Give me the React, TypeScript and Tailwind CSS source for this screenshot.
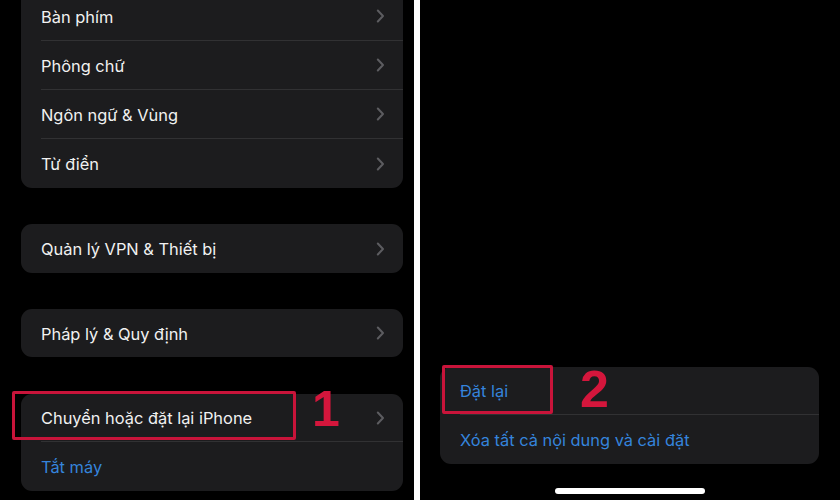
import React from "react";

const Chevron = () => (
  <svg width="9" height="14" viewBox="0 0 9 14" fill="none" className="shrink-0">
    <path d="M1.8 1.5L7 7L1.8 12.5" stroke="#5c5c60" strokeWidth="2" strokeLinecap="round" strokeLinejoin="round" />
  </svg>
);

type RowProps = { label: string; chevron?: boolean; blue?: boolean; last?: boolean; h?: string };

const Row = ({ label, chevron = true, blue = false, last = false, h = "h-[49px]" }: RowProps) => (
  <div className={`flex items-center pl-[20px] ${h}`}>
    <div className={`flex flex-1 h-full items-center pr-[18px] ${last ? "" : "border-b border-[#313133]"}`}>
      <span className={`flex-1 pt-[2px] text-[16.4px] ${blue ? "text-[#3584dc]" : "text-[#f1f1f1]"}`}>{label}</span>
      {chevron && <Chevron />}
    </div>
  </div>
);

const Card = ({ children, className = "" }: { children: React.ReactNode; className?: string }) => (
  <div className={`bg-[#1c1c1e] rounded-[11px] overflow-hidden ${className}`}>{children}</div>
);

export default function App() {
  return (
    <div
      className="relative flex w-[840px] h-[500px] bg-black overflow-hidden"
      style={{ fontFamily: "Inter, 'Noto Sans', 'Liberation Sans', sans-serif" }}
    >
      {/* left screen */}
      <div className="w-[414px] h-full bg-black pl-[21px] pr-[11px]">
        <Card className="-mt-[8px] rounded-t-none">
          <Row label="Bàn phím" />
          <Row label="Phông chữ" />
          <Row label="Ngôn ngữ & Vùng" />
          <Row label="Từ điển" last />
        </Card>
        <Card className="mt-[36px]">
          <Row label="Quản lý VPN & Thiết bị" last />
        </Card>
        <Card className="mt-[36px]">
          <Row label="Pháp lý & Quy định" last h="h-[48px]" />
        </Card>
        <Card className="mt-[37px]">
          <Row label="Chuyển hoặc đặt lại iPhone" h="h-[48px]" />
          <Row label="Tắt máy" chevron={false} blue last />
        </Card>
      </div>

      {/* divider */}
      <div className="w-[6px] h-full bg-white" />

      {/* right screen */}
      <div className="w-[420px] h-full bg-black flex flex-col pl-[20px] pr-[21px]">
        <div className="flex-1" />
        <Card className="mb-[24px]">
          <Row label="Đặt lại" chevron={false} blue h="h-[48px]" />
          <Row label="Xóa tất cả nội dung và cài đặt" chevron={false} blue last />
        </Card>
        <div className="flex justify-center pb-[6px]">
          <div className="w-[150px] h-[6px] rounded-full bg-white" />
        </div>
      </div>

      {/* annotations */}
      <div className="absolute left-[12px] top-[391px] w-[284px] h-[49px] border-[3px] border-[#c8143a] rounded-[2px]" />
      <div
        className="absolute left-[312px] top-[384px] text-[50px] leading-none font-bold text-[#d4163c]"
        style={{ fontFamily: "'Liberation Sans', Arial, sans-serif" }}
      >
        1
      </div>
      <div className="absolute left-[442px] top-[365px] w-[111px] h-[49px] border-[3px] border-[#c8143a] rounded-[2px]" />
      <div
        className="absolute left-[580px] top-[363px] text-[52px] leading-none font-bold text-[#d4163c]"
        style={{ fontFamily: "'Liberation Sans', Arial, sans-serif" }}
      >
        2
      </div>
    </div>
  );
}
